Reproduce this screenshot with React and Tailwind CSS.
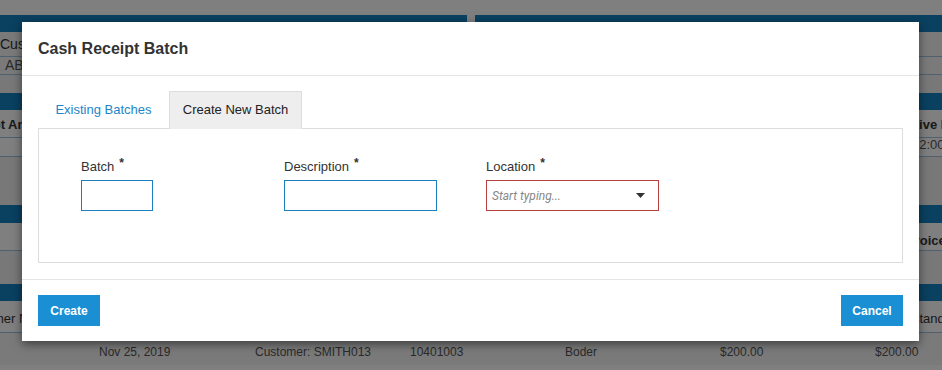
import React from "react";

const bgFont = { fontFamily: '"Liberation Sans", Arial, sans-serif' };

function Row({ h, border = true, className = "", children }) {
  return (
    <div
      className={`flex items-center w-full shrink-0 whitespace-nowrap ${border ? "border-b border-[#9fc3dc]" : ""} ${className}`}
      style={{ height: h }}
    >
      {children}
    </div>
  );
}

function Background() {
  return (
    <div className="flex flex-col w-[942px] text-[13px] text-[#444]">
      <div className="h-[15px] bg-white" />
      <div className="grid grid-cols-[467px_467px] gap-[8px] bg-white">
        <div className="h-[17px] bg-[#1480c0]" />
        <div className="h-[17px] bg-[#1480c0]" />
      </div>
      <Row h={25} className="bg-[#f4f4f4]">
        <span className="text-[#333] text-[14px]">Customer</span>
      </Row>
      <Row h={18} className="bg-[#f4f4f4]">
        <span className="ml-[5px] text-[#555] text-[14px]">ABSOLUTE</span>
      </Row>
      <Row h={18} border={false} className="bg-[#f0f0f0]" />
      <Row h={17} border={false} className="bg-[#1480c0]" />
      <Row h={28} className="bg-white pt-[2px]">
        <span className="-ml-[42px] font-bold text-[#333]">Receipt Amount</span>
        <span className="ml-auto w-[23px] overflow-hidden font-bold text-[#333]">
          <span className="-ml-[36px]">Effective Date</span>
        </span>
      </Row>
      <Row h={19} className="bg-white pb-[4px]">
        <span className="ml-auto w-[23px] overflow-hidden text-[#555]">
          <span className="-ml-[7px]">12:00</span>
        </span>
      </Row>
      <Row h={48} border={false} className="bg-[#f0f0f0]" />
      <Row h={18} border={false} className="bg-[#1480c0]" />
      <Row h={28} className="bg-white pt-[8px]">
        <span className="ml-auto w-[23px] overflow-hidden font-bold text-[#333]">
          <span className="-ml-[18px]">Invoice</span>
        </span>
      </Row>
      <Row h={33} border={false} className="bg-[#f0f0f0]" />
      <Row h={17} border={false} className="bg-[#1480c0]" />
      <Row h={32} className="bg-white pt-[5px]">
        <span className="-ml-[41px] text-[#333]">Customer Name</span>
        <span className="ml-auto w-[23px] overflow-hidden text-[#333]">
          <span className="-ml-[27px]">Outstanding</span>
        </span>
      </Row>
      <Row h={32} border={false} className="bg-[#f4f4f4] pt-[6px]">
        <div className="grid grid-cols-[99px_156px_155px_155px_155px_155px_67px] w-full text-[12px] text-[#555]">
          <span />
          <span>Nov 25, 2019</span>
          <span>Customer: SMITH013</span>
          <span>10401003</span>
          <span>Boder</span>
          <span>$200.00</span>
          <span>$200.00</span>
        </div>
      </Row>
    </div>
  );
}

function Label({ children }) {
  return (
    <div className="h-[16px] leading-[16px] text-[13px] text-[#333] mb-[5px]">
      {children}
      <span className="ml-[5px] text-[12px] font-bold relative -top-[4px]">*</span>
    </div>
  );
}

export default function App() {
  return (
    <div className="relative w-[942px] h-[370px] overflow-hidden bg-white" style={bgFont}>
      <Background />
      <div className="absolute inset-0 bg-black/50" />
      <div className="absolute left-[22px] top-[22px] w-[897px] bg-white shadow-[0_3px_9px_rgba(0,0,0,0.5)] flex flex-col">
        {/* header */}
        <div className="h-[54px] border-b border-[#e5e5e5] px-[16px] flex items-center">
          <h4 className="text-[16px] font-bold text-[#333] leading-none">Cash Receipt Batch</h4>
        </div>
        {/* body */}
        <div className="px-[16px] pt-[15px] pb-[16px] border-b border-[#e5e5e5]">
          <div className="flex h-[37px]">
            <div className="w-[131px] flex items-center justify-center text-[13px] text-[#1d86c8]">
              Existing Batches
            </div>
            <div className="relative z-10 w-[133px] h-[38px] flex items-center justify-center text-[13px] text-[#222] bg-[#eeeeee] border border-b-0 border-[#dddddd]">
              <span className="-mt-[1px]">Create New Batch</span>
            </div>
          </div>
          <div className="border border-[#dddddd] h-[135px] pl-[42px] pt-[30px]">
            <div className="grid grid-cols-[203px_202px_173px]">
              <div>
                <Label>Batch</Label>
                <div className="w-[72px] h-[31px] border border-[#1e7fbf] bg-white" />
              </div>
              <div>
                <Label>Description</Label>
                <div className="w-[153px] h-[31px] border border-[#1e7fbf] bg-white" />
              </div>
              <div>
                <Label>Location</Label>
                <div className="w-[173px] h-[31px] border border-[#b8403f] bg-white flex items-center pl-[5px] pr-[13px]">
                  <span className="italic text-[12px] text-[#888]" style={{ fontFamily: 'Roboto, "Liberation Sans", sans-serif' }}>
                    Start typing...
                  </span>
                  <svg className="ml-auto" width="9" height="5" viewBox="0 0 9 5">
                    <path d="M0 0 H9 L4.5 5 Z" fill="#333" />
                  </svg>
                </div>
              </div>
            </div>
          </div>
        </div>
        {/* footer */}
        <div className="px-[16px] pt-[15px] pb-[15px] flex justify-between">
          <button className="w-[62px] h-[31px] bg-[#1a8fd3] text-white text-[12px] font-bold">Create</button>
          <button className="w-[62px] h-[31px] bg-[#1a8fd3] text-white text-[12px] font-bold">Cancel</button>
        </div>
      </div>
    </div>
  );
}
